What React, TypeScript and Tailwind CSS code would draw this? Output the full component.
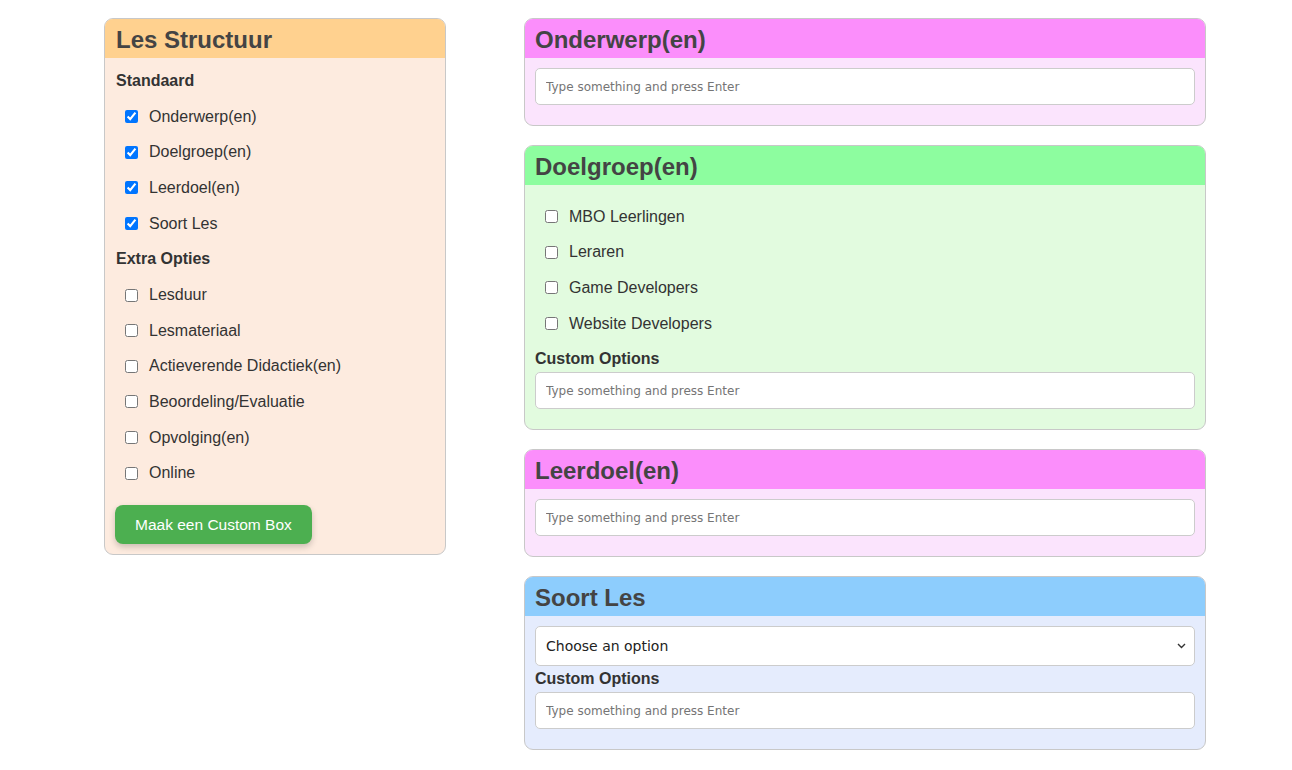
import { useState } from "react";

type Option = { label: string; checked: boolean };

const standaard: Option[] = [
  { label: "Onderwerp(en)", checked: true },
  { label: "Doelgroep(en)", checked: true },
  { label: "Leerdoel(en)", checked: true },
  { label: "Soort Les", checked: true },
];

const extra: Option[] = [
  { label: "Lesduur", checked: false },
  { label: "Lesmateriaal", checked: false },
  { label: "Actieverende Didactiek(en)", checked: false },
  { label: "Beoordeling/Evaluatie", checked: false },
  { label: "Opvolging(en)", checked: false },
  { label: "Online", checked: false },
];

const doelgroepen = ["MBO Leerlingen", "Leraren", "Game Developers", "Website Developers"];

function CheckRow({ label, defaultChecked }: { label: string; defaultChecked?: boolean }) {
  return (
    <label className="flex h-[35.6px] items-center text-[16px] text-[#333]">
      <input type="checkbox" defaultChecked={defaultChecked} className="m-0 mr-[11px] h-[13px] w-[13px]" />
      {label}
    </label>
  );
}

function TagInput() {
  return (
    <input
      type="text"
      placeholder="Type something and press Enter"
      className="h-[37px] w-full rounded-[5px] border border-[#ccc] bg-white px-[10px] font-['DejaVu_Sans',sans-serif] text-[12px] text-[#333] placeholder:text-[#757575] outline-none"
    />
  );
}

function Card({ title, head, body, children }: { title: string; head: string; body: string; children: React.ReactNode }) {
  return (
    <section className={`overflow-hidden rounded-[9px] border border-[#c8c8c8] ${body}`}>
      <h2 className={`flex h-[39px] items-center px-[10px] pt-[2px] text-[24px] font-bold leading-[28px] text-[#444] ${head}`}>{title}</h2>
      {children}
    </section>
  );
}

export default function App() {
  const [soort, setSoort] = useState("");

  return (
    <div className="flex min-h-[770px] items-start gap-[78px] bg-white pl-[104px] pt-[18px] font-['Liberation_Sans',Arial,sans-serif]">
      <aside className="w-[342px] overflow-hidden rounded-[9px] border border-[#c8c8c8] bg-[#fdebdf]">
        <h1 className="flex h-[39px] items-center bg-[#ffd18f] px-[11px] pt-[2px] text-[24px] font-bold leading-[28px] text-[#444]">Les Structuur</h1>
        <div className="px-[11px] pb-[10px] pt-[5px]">
          <p className="flex h-[36px] items-center text-[16px] font-bold text-[#333]">Standaard</p>
          <div className="pl-[9px]">
            {standaard.map((o) => (
              <CheckRow key={o.label} label={o.label} defaultChecked={o.checked} />
            ))}
          </div>
          <p className="flex h-[36px] items-center text-[16px] font-bold text-[#333]">Extra Opties</p>
          <div className="pl-[9px]">
            {extra.map((o) => (
              <CheckRow key={o.label} label={o.label} defaultChecked={o.checked} />
            ))}
          </div>
          <button
            type="button"
            className="-ml-px mt-[14px] h-[39px] rounded-[8px] bg-[#4caf50] px-[20px] text-[15.5px] text-white shadow-[0_3px_6px_rgba(0,0,0,0.2)]"
          >
            Maak een Custom Box
          </button>
        </div>
      </aside>

      <main className="flex w-[682px] flex-col gap-[19px] pb-[20px]">
        <Card title="Onderwerp(en)" head="bg-[#fb8efb]" body="bg-[#fbe4fd]">
          <div className="px-[10px] pb-[20px] pt-[10px]">
            <TagInput />
          </div>
        </Card>

        <Card title="Doelgroep(en)" head="bg-[#8dfd9f]" body="bg-[#e2fbdf]">
          <div className="px-[10px] pb-[20px] pt-[14px]">
            <div className="pl-[10px]">
              {doelgroepen.map((d) => (
                <CheckRow key={d} label={d} />
              ))}
            </div>
            <p className="mt-[9px] mb-[4px] text-[16px] font-bold leading-[18px] text-[#333]">Custom Options</p>
            <TagInput />
          </div>
        </Card>

        <Card title="Leerdoel(en)" head="bg-[#fb8efb]" body="bg-[#fbe4fd]">
          <div className="px-[10px] pb-[20px] pt-[10px]">
            <TagInput />
          </div>
        </Card>

        <Card title="Soort Les" head="bg-[#8dcdfd]" body="bg-[#e5ecfd]">
          <div className="px-[10px] pb-[20px] pt-[10px]">
            <div className="relative">
              <select
                value={soort}
                onChange={(e) => setSoort(e.target.value)}
                className="h-[40px] w-full appearance-none rounded-[5px] border border-[#ccc] bg-white px-[10px] font-['DejaVu_Sans',sans-serif] text-[14px] text-[#222] outline-none"
              >
                <option value="">Choose an option</option>
                <option value="theorie">Theorie</option>
                <option value="praktijk">Praktijk</option>
              </select>
              <svg
                className="pointer-events-none absolute right-[9px] top-[17px] h-[6px] w-[9px]"
                viewBox="0 0 9 6"
                fill="none"
                stroke="#333"
                strokeWidth="1.4"
              >
                <path d="M1 1l3.5 3.5L8 1" />
              </svg>
            </div>
            <p className="mt-[4px] mb-[4px] text-[16px] font-bold leading-[18px] text-[#333]">Custom Options</p>
            <TagInput />
          </div>
        </Card>
      </main>
    </div>
  );
}
